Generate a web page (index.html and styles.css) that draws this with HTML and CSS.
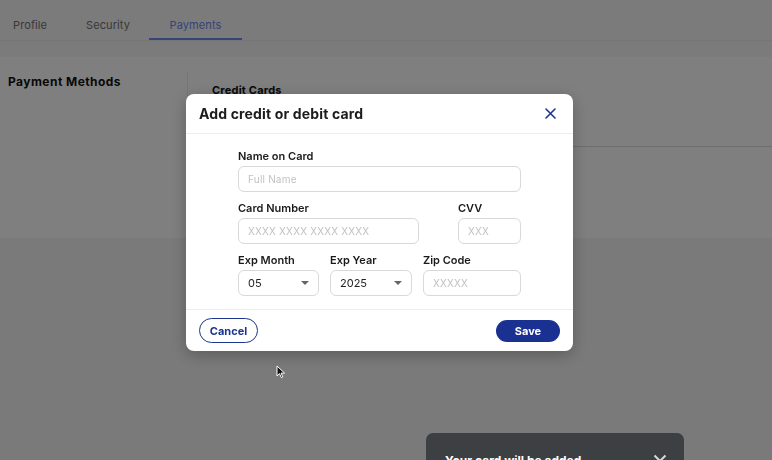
FILE: index.html
```html
<!DOCTYPE html>
<html lang="en">
<head>
<meta charset="utf-8">
<title>Payments</title>
<link rel="stylesheet" href="styles.css">
</head>
<body>
<div class="page">
  <nav class="tabs">
    <a class="tab">Profile</a>
    <a class="tab">Security</a>
    <a class="tab active">Payments</a>
  </nav>
  <div class="gap-strip"></div>
  <section class="panel">
    <aside class="side"><h2>Payment Methods</h2></aside>
    <div class="main">
      <div class="main-head"><h3>Credit Cards</h3></div>
    </div>
  </section>
  <div class="rest"></div>
</div>

<div class="overlay">
  <div class="modal">
    <header class="modal-head">
      <h1>Add credit or debit card</h1>
      <button class="close" aria-label="Close">
        <svg width="11" height="11" viewBox="0 0 11 11"><path d="M1 1L10 10M10 1L1 10" stroke="#1d3590" stroke-width="1.6" stroke-linecap="round"/></svg>
      </button>
    </header>
    <div class="modal-body">
      <div class="row">
        <label class="field grow">
          <span class="label">Name on Card</span>
          <span class="input"><span class="ph">Full Name</span></span>
        </label>
      </div>
      <div class="row gap-wide">
        <label class="field w-card">
          <span class="label">Card Number</span>
          <span class="input"><span class="ph">XXXX XXXX XXXX XXXX</span></span>
        </label>
        <label class="field w-cvv">
          <span class="label">CVV</span>
          <span class="input"><span class="ph">XXX</span></span>
        </label>
      </div>
      <div class="row">
        <label class="field w-month">
          <span class="label">Exp Month</span>
          <span class="input select"><span class="val">05</span><span class="caret"></span></span>
        </label>
        <label class="field w-year">
          <span class="label">Exp Year</span>
          <span class="input select"><span class="val">2025</span><span class="caret"></span></span>
        </label>
        <label class="field w-zip">
          <span class="label">Zip Code</span>
          <span class="input"><span class="ph">XXXXX</span></span>
        </label>
      </div>
    </div>
    <footer class="modal-foot">
      <button class="btn cancel">Cancel</button>
      <button class="btn save">Save</button>
    </footer>
  </div>
  <div class="toast">
    <span class="toast-text">Your card will be added</span>
    <svg class="toast-x" width="14" height="14" viewBox="0 0 14 14"><path d="M1.5 1.5L12.5 12.5M12.5 1.5L1.5 12.5" stroke="#d8d8d8" stroke-width="2"/></svg>
  </div>
  <svg class="cursor" width="10" height="14" viewBox="0 0 10 14"><path d="M1 1V11L3.5 8.6L5.3 12.6L6.8 11.9L5.1 8.1H8.6Z" fill="#111" stroke="#fff" stroke-width="1"/></svg>
</div>
</body>
</html>
```

FILE: styles.css
```css
* { box-sizing: border-box; }
html, body { margin: 0; padding: 0; }
body {
  width: 772px;
  height: 460px;
  overflow: hidden;
  font-family: "Inter", "Noto Sans", sans-serif;
  background: #f4f4f4;
  color: #111;
}
.page { display: flex; flex-direction: column; height: 460px; }
.tabs {
  height: 41px;
  display: flex;
  align-items: stretch;
  background: #f6f6f6;
  border-bottom: 1px solid #ececec;
}
.tab {
  display: flex;
  align-items: center;
  font-size: 11px;
  color: #727272;
  padding-top: 10px;
  letter-spacing: 0.1px;
}
.tab:nth-child(1) { padding-left: 13px; width: 86px; }
.tab:nth-child(2) { width: 63px; }
.tab.active {
  color: #6f88f0;
  justify-content: center;
  width: 93px;
  border-bottom: 2px solid #6f88f0;
  padding-top: 12px;
}
.gap-strip { height: 16px; background: #f7f7f7; }
.panel {
  height: 181px;
  background: #ffffff;
  display: flex;
}
.side { width: 187px; padding: 17px 8px; }
.side h2 { margin: 0; font-size: 12px; font-weight: 700; color: #111; letter-spacing: 0.45px; }
.main { flex: 1; border-left: 1px solid #ebebeb; margin-top: 15px; }
.main-head { height: 75px; border-bottom: 1px solid #dcdcdc; padding: 11px 24px 0; }
.main-head h3 { margin: 0; font-size: 11px; font-weight: 700; color: #111; letter-spacing: 0.2px; }
.rest { flex: 1; background: #f4f4f4; }

.overlay {
  position: fixed;
  inset: 0;
  background: rgba(0, 0, 0, 0.5);
  padding: 94px 0 0 186px;
}
.modal {
  width: 387px;
  height: 257px;
  background: #fff;
  border-radius: 8px;
  box-shadow: 0 4px 16px rgba(0,0,0,0.25);
  display: flex;
  flex-direction: column;
}
.modal-head {
  height: 40px;
  display: flex;
  align-items: center;
  justify-content: space-between;
  padding: 0 13px;
  border-bottom: 1px solid #ececec;
}
.modal-head h1 { margin: 0; font-size: 14px; font-weight: 700; color: #1c1c1c; letter-spacing: 0.15px; }
.close { background: none; border: 0; padding: 0; width: 16px; height: 16px; display: flex; align-items: center; justify-content: center; margin-right: 2px; }
.modal-body { flex: 1; padding: 16px 52px 0 52px; display: flex; flex-direction: column; gap: 10px; }
.row { display: flex; gap: 11px; }
.row.gap-wide { gap: 39px; }
.field { display: flex; flex-direction: column; gap: 4px; }
.grow { flex: 1; }
.w-card { width: 181px; }
.w-cvv { width: 63px; }
.w-month { width: 81px; }
.w-year { width: 82px; }
.w-zip { width: 98px; }
.label { font-size: 11px; font-weight: 600; color: #1a1a1a; line-height: 12px; }
.input {
  height: 26px;
  border: 1px solid #d9d9d9;
  border-radius: 6px;
  display: flex;
  align-items: center;
  padding: 0 9px;
  font-size: 10px;
}
.ph { color: #c2c2c2; letter-spacing: 0.2px; }
.val { color: #222; font-size: 11px; flex: 1; }
.select { padding-right: 9px; }
.caret { width: 0; height: 0; border-left: 4px solid transparent; border-right: 4px solid transparent; border-top: 4px solid #666; }
.modal-foot {
  height: 42px;
  border-top: 1px solid #ececec;
  display: flex;
  align-items: center;
  justify-content: space-between;
  padding: 0 13px;
}
.btn { font-family: inherit; font-size: 11px; font-weight: 700; border-radius: 14px; cursor: pointer; }
.cancel { width: 59px; height: 25px; background: #fff; color: #1d3590; border: 1px solid #1d3590; }
.save { width: 64px; height: 22px; background: #1b3191; color: #fff; border: 0; }

.toast {
  position: absolute;
  left: 426px;
  top: 433px;
  width: 258px;
  height: 50px;
  background: #3c4043;
  border-radius: 7px;
  display: flex;
  align-items: flex-start;
  justify-content: space-between;
  padding: 21px 17px 0 19px;
}
.toast-text { color: #fff; font-size: 12px; font-weight: 700; line-height: 14px; white-space: nowrap; }
.cursor { position: absolute; left: 276px; top: 365px; }
```
